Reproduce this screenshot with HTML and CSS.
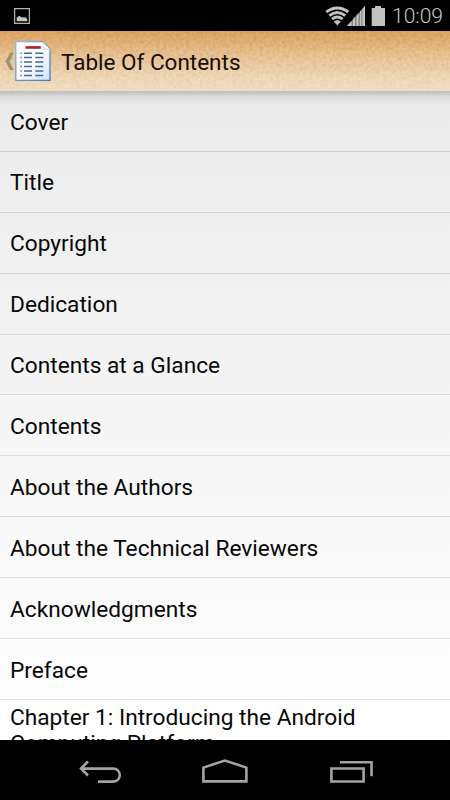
FILE: index.html
```html
<!DOCTYPE html>
<html lang="en">
<head>
<meta charset="utf-8">
<title>Table Of Contents</title>
<link rel="stylesheet" href="styles.css">
</head>
<body>
<div class="screen">
  <header class="status">
    <svg class="status-picture" width="16" height="16" viewBox="0 0 16 16">
      <path d="M.6.6h14.8v14.8H.6z" fill="none" stroke="#b4b4b4" stroke-width="1.2"/>
      <path d="M2.700 13.300V9.600l1.500-.9 1-1.200 1.500 1.500 1.100.6 1-.6 1.200.8 1.200-.7 2.100 2v2.200z" fill="#c4c4c4"/>
    </svg>
    <svg class="status-icons" width="60" height="22" viewBox="325 4 60 22">
      <g fill="none" stroke="#c1c1c1" stroke-width="2.900">
        <path d="M326.300 11Q337.300 2.800 348.300 11"/>
        <path d="M329.300 14.700Q337.300 8.400 345.300 14.700"/>
        <path d="M332 18.100Q337.300 13.900 342.600 18.100"/>
      </g>
      <path d="M333.700 20.500Q337.300 17.300 340.900 20.500L337.300 24.500z" fill="#c1c1c1"/>
      <path d="M347 25L365 5v20z" fill="#858585"/>
      <path d="M347 25l4.500-5v5zM353 25v-6.700l2-2.200V25zM356.500 25V14.400l2-2.200V25zM360 25V10.500l1.300-1.400V25zM362.500 25V7.800L365 5v20z" fill="#c4c4c4"/>
      <path d="M371.700 7h3.300V5h6v2h4v18h-13.300z" fill="#c1c1c1"/>
    </svg>
    <span class="clock">10:09</span>
  </header>

  <div class="action-bar">
    <svg class="grain" width="450" height="60">
      <filter id="grain" x="0" y="0" width="100%" height="100%" color-interpolation-filters="sRGB">
        <feTurbulence type="fractalNoise" baseFrequency=".3" numOctaves="3" seed="8"/>
        <feColorMatrix values="0 0 0 0 .78  0 0 0 0 .5  0 0 0 0 .2  1.700 0 0 0 -.6"/>
      </filter>
      <rect width="450" height="60" filter="url(#grain)"/>
    </svg>
    <svg class="up-icon" width="48" height="46" viewBox="4 38 48 46">
      <defs>
        <linearGradient id="paper" x1="0" y1="0" x2="1" y2="1">
          <stop offset="0" stop-color="#fff"/><stop offset=".5" stop-color="#fafcff"/><stop offset="1" stop-color="#cfe2f8"/>
        </linearGradient>
        <linearGradient id="edge" x1="0" y1="0" x2="1" y2="1">
          <stop offset="0" stop-color="#8db9e6"/><stop offset="1" stop-color="#4278b8"/>
        </linearGradient>
      </defs>
      <path d="M10.200 52.500h3.600L9.500 61.500l4.300 8.500h-3.600L5.500 61.500z" fill="#a18e77"/>
      <path d="M15.800 41.700H43l7 7.500v31.200H15.800z" fill="url(#paper)" stroke="url(#edge)" stroke-width="1.300"/>
      <path d="M42 42.200c1.800 2.500 1.800 5 .8 7.800 2.500-1 5-.8 7 .8v-1.600L43.300 42z" fill="#d3d8de"/>
      <path d="M43.300 43c1 2 1 3.800.5 5.800 2-.6 3.800-.5 5.500.2z" fill="#fff"/>
      <path d="M25.500 46.100h15.300v2.700H25.500z" fill="#b9202c"/>
      <g stroke-width="1.500">
        <path d="M20.300 53.200h1.700M20.300 57.600h1.700M20.300 62.100h1.700M20.300 66.600h1.700M20.300 71.100h1.700M20.300 75.500h1.700" stroke="#7183a8"/>
        <path d="M24 53.200h8M35.300 53.200h8M24 57.600h8M35.300 57.600h8M24 62.100h8M35.300 62.100h8M24 66.600h8M35.300 66.600h8M24 71.100h8M35.300 71.100h8M24 75.500h8M35.300 75.500h8" stroke="#46659a"/>
      </g>
    </svg>
    <h1>Table Of Contents</h1>
  </div>

  <main class="list-area">
    <ul class="contents">
      <li>Cover</li>
      <li>Title</li>
      <li>Copyright</li>
      <li>Dedication</li>
      <li>Contents at a Glance</li>
      <li>Contents</li>
      <li>About the Authors</li>
      <li>About the Technical Reviewers</li>
      <li>Acknowledgments</li>
      <li>Preface</li>
      <li class="two-line">Chapter 1: Introducing the Android Computing Platform</li>
    </ul>
  </main>

  <nav class="nav-bar">
    <svg width="450" height="60" viewBox="0 740 450 60" fill="none" stroke="#a3a3a3" stroke-width="2.600">
      <path d="M88 761.500l-7 7 7 7M81 768.600h32c9 0 9 13 0 13H98"/>
      <path d="M203.400 781.400V767.600l21.500-7.100 21.500 7.100v13.800z"/>
      <path d="M331.400 768.500h32.200v13h-32.200zM340 762.300h31.500v14"/>
    </svg>
  </nav>
</div>
</body>
</html>
```
FILE: styles.css
```css
* { box-sizing: border-box; }

body {
  margin: 0;
  background: #000;
  font-family: Roboto, "Liberation Sans", sans-serif;
}

.screen {
  display: flex;
  flex-direction: column;
  width: 450px;
  height: 800px;
  overflow: hidden;
}

.status {
  display: flex;
  align-items: center;
  height: 31px;
  padding: 0 7px 0 14px;
  background: #000;
}

.status-icons { margin-left: auto; }

.clock {
  width: 51px;
  margin-left: 7px;
  padding-top: 1px;
  color: #c8c8c8;
  font-size: 21px;
  font-weight: 300;
  line-height: 24px;
  text-align: right;
  white-space: nowrap;
}

.action-bar {
  position: relative;
  display: flex;
  align-items: center;
  height: 60px;
  padding-left: 4px;
  background: linear-gradient(#dfa764 0, #e4b881 22%, #eacca6 50%, #efdabc 78%, #f0dfc7 100%);
}

.grain {
  position: absolute;
  inset: 0;
  opacity: .5;
  mask-image: linear-gradient(#000, rgba(0, 0, 0, .2));
}

.up-icon { position: relative; }

h1 {
  position: relative;
  margin: 1px 0 0 9px;
  color: #190d08;
  font-size: 22.500px;
  font-weight: 400;
  line-height: 28px;
}

.list-area {
  flex: none;
  height: 649px;
  overflow: hidden;
  background:
    linear-gradient(rgba(0, 0, 0, .2), rgba(0, 0, 0, .08) 5px, rgba(0, 0, 0, 0) 14px),
    linear-gradient(#ebebeb, #fff);
}

.contents {
  margin: 0;
  padding: 0;
  list-style: none;
}

.contents li {
  display: flex;
  align-items: center;
  height: 60.900px;
  padding: 3.200px 10px 0;
  border-bottom: 1px solid rgba(0, 0, 0, .11);
  color: #080808;
  font-size: 22.700px;
  line-height: 26px;
}

.contents .two-line {
  align-items: flex-start;
  padding-top: 5px;
}

.nav-bar {
  height: 60px;
  background: #000;
}

svg { display: block; }
```
